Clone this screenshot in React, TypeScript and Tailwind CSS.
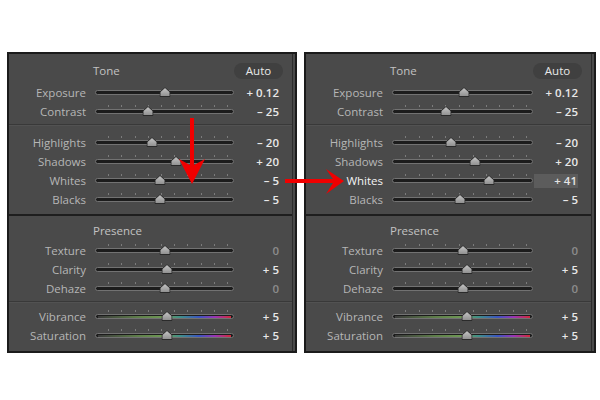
import React from 'react';

type Row = {
  label: string;
  value: string;
  pos: number;
  ticks?: boolean;
  muted?: boolean;
  active?: boolean;
  color?: boolean;
};

type PanelData = {
  tone: Row[];
  light: Row[];
  presence: Row[];
  color: Row[];
};

const TICKS = [13, 26.5, 40, 53, 66.5, 80, 93, 106.5, 120, 133];

const before: PanelData = {
  tone: [
    { label: 'Exposure', value: '+ 0.12', pos: 0.507 },
    { label: 'Contrast', value: '– 25', pos: 0.379, ticks: true },
  ],
  light: [
    { label: 'Highlights', value: '– 20', pos: 0.407, ticks: true },
    { label: 'Shadows', value: '+ 20', pos: 0.586, ticks: true },
    { label: 'Whites', value: '– 5', pos: 0.471, ticks: true },
    { label: 'Blacks', value: '– 5', pos: 0.471, ticks: true },
  ],
  presence: [
    { label: 'Texture', value: '0', pos: 0.5, ticks: true, muted: true },
    { label: 'Clarity', value: '+ 5', pos: 0.521, ticks: true },
    { label: 'Dehaze', value: '0', pos: 0.5, ticks: true, muted: true },
  ],
  color: [
    { label: 'Vibrance', value: '+ 5', pos: 0.521, ticks: true, color: true },
    { label: 'Saturation', value: '+ 5', pos: 0.521, ticks: true, color: true },
  ],
};

const after: PanelData = {
  tone: [
    { label: 'Exposure', value: '+ 0.12', pos: 0.51 },
    { label: 'Contrast', value: '– 25', pos: 0.38, ticks: true },
  ],
  light: [
    { label: 'Highlights', value: '– 20', pos: 0.417, ticks: true },
    { label: 'Shadows', value: '+ 20', pos: 0.59, ticks: true },
    { label: 'Whites', value: '+ 41', pos: 0.69, ticks: true, active: true },
    { label: 'Blacks', value: '– 5', pos: 0.48, ticks: true },
  ],
  presence: [
    { label: 'Texture', value: '0', pos: 0.504, ticks: true, muted: true },
    { label: 'Clarity', value: '+ 5', pos: 0.532, ticks: true },
    { label: 'Dehaze', value: '0', pos: 0.504, ticks: true, muted: true },
  ],
  color: [
    { label: 'Vibrance', value: '+ 5', pos: 0.532, ticks: true, color: true },
    { label: 'Saturation', value: '+ 5', pos: 0.532, ticks: true, color: true },
  ],
};

function Thumb() {
  return (
    <svg width="11" height="10" viewBox="0 0 11 10" className="block">
      <defs>
        <linearGradient id="thumbFill" x1="0" y1="0" x2="0" y2="1">
          <stop offset="0" stopColor="#c8c8c8" />
          <stop offset="1" stopColor="#8e8e8e" />
        </linearGradient>
      </defs>
      <polygon points="5.5,0.5 10.5,5 10.5,9.5 0.5,9.5 0.5,5" fill="url(#thumbFill)" stroke="#2a2a2a" strokeWidth="1" />
    </svg>
  );
}

function Track({ row }: { row: Row }) {
  return (
    <div className="relative flex h-full flex-1 items-center">
      {row.ticks && (
        <div className="absolute left-0 right-0 top-[3px] h-[2px]">
          {TICKS.map((t) => (
            <span key={t} className="absolute top-0 h-[2px] w-px bg-[#7c7c7c]" style={{ left: `${(t / 140) * 100}%` }} />
          ))}
        </div>
      )}
      <div className="h-[5px] w-full overflow-hidden rounded-full border border-[#727272] bg-[#1c1c1c]">
        {row.color && (
          <div className="mx-[2px] mt-[1px] h-[2px] bg-[linear-gradient(to_right,#3a3a3a_0%,#5f7f4a_30%,#6f9a55_50%,#3f8f8a_62%,#3b55c0_76%,#9a35b5_88%,#d22a3a_100%)]" />
        )}
      </div>
      <div className="absolute top-[4px] -translate-x-1/2" style={{ left: `${row.pos * 100}%` }}>
        <Thumb />
      </div>
    </div>
  );
}

function SliderRow({ row }: { row: Row }) {
  return (
    <div className="flex h-[19px] items-center">
      <div className={`w-[77px] text-right ${row.active ? 'text-[#f4f4f4]' : 'text-[#b6b6b6]'}`}>{row.label}</div>
      <div className="ml-[9px] flex h-full flex-1 items-center">
        <Track row={row} />
      </div>
      <div className="ml-px flex w-[44px] justify-end">
        {row.active ? (
          <div className="flex h-[14px] w-full items-center justify-end bg-[#5c5c5c] pr-px font-semibold text-[#e4e4e4]">{row.value}</div>
        ) : (
          <span className={`font-semibold ${row.muted ? 'text-[#8c8c8c]' : 'text-[#e8e8e8]'}`}>{row.value}</span>
        )}
      </div>
    </div>
  );
}

function Divider() {
  return (
    <div>
      <div className="h-px bg-[#393939]" />
      <div className="h-px bg-[#525252]" />
    </div>
  );
}

function BasicPanel({ data, width }: { data: PanelData; width: string }) {
  return (
    <div className={`flex h-[301px] border-2 border-[#1b1b1b] bg-[#4a4a4a] ${width}`}>
      <div className="flex flex-1 flex-col pr-[13px]">
        <div className="mt-[9px] flex h-[16px] items-center">
          <span className="pl-[84px] text-[#c2c2c2]">Tone</span>
          <span className="ml-auto mr-[-4px] flex h-[16px] w-[49px] items-center justify-center rounded-full bg-[#404040] text-[#e8e8e8]">
            Auto
          </span>
        </div>
        <div className="mt-[4px]">
          {data.tone.map((r) => (
            <SliderRow key={r.label} row={r} />
          ))}
        </div>
        <div className="-mr-[13px] mt-[3px]">
          <Divider />
        </div>
        <div className="mt-[7px]">
          {data.light.map((r) => (
            <SliderRow key={r.label} row={r} />
          ))}
        </div>
        <div className="-mr-[13px] mt-[5px] h-[2px] bg-[#1e1e1e]" />
        <div className="mt-[7px] flex h-[16px] items-center">
          <span className="pl-[84px] text-[#c2c2c2]">Presence</span>
        </div>
        <div className="mt-[2px]">
          {data.presence.map((r) => (
            <SliderRow key={r.label} row={r} />
          ))}
        </div>
        <div className="-mr-[13px] mt-[3px]">
          <Divider />
        </div>
        <div className="mt-[4px]">
          {data.color.map((r) => (
            <SliderRow key={r.label} row={r} />
          ))}
        </div>
      </div>
      <div className="w-[3px] border-l border-[#2c2c2c]" />
    </div>
  );
}

export default function App() {
  return (
    <div className="relative h-[400px] w-[600px] overflow-hidden bg-white font-['Open_Sans',sans-serif] text-[11.5px] leading-none">
      <div className="flex gap-[7px] pl-[7px] pt-[52px]">
        <BasicPanel data={before} width="w-[290px]" />
        <BasicPanel data={after} width="w-[292px]" />
      </div>

      {/* red call-out arrows */}
      <svg className="pointer-events-none absolute left-0 top-0" width="600" height="400" viewBox="0 0 600 400">
        <polygon points="190,118 194,118 194,165 205,159 192,184 179,159 190,165" fill="#f00000" />
        <polygon points="285,179 333,179 326,169 344,181 326,194 333,183 285,183" fill="#f00000" />
      </svg>
    </div>
  );
}
